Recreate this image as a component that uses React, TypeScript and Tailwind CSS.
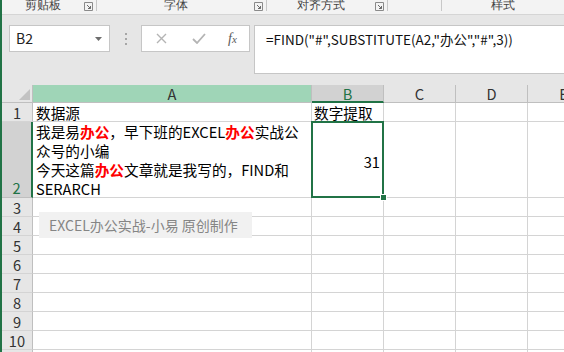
import React from 'react'

const CELL_FONT = { fontFamily: '"Noto Sans CJK SC", "Noto Sans", sans-serif' }

function Launcher() {
  return (
    <svg width="9" height="9" viewBox="0 0 9 9" className="shrink-0">
      <path d="M0.5 0.5h8v8h-8z" fill="none" stroke="#8a8a8a" strokeWidth="1" />
      <path d="M3 3l3.5 3.5M6.5 4v2.5H4" fill="none" stroke="#6a6a6a" strokeWidth="1" />
    </svg>
  )
}

function RibbonLabels() {
  return (
    <div className="flex h-[15px] overflow-hidden border-b border-[#d5d5d5] bg-[#f3f3f3] text-[12px] leading-[12px] text-[#444]">
      <div className="flex w-[95px] items-start">
        <span className="-mt-[1px] flex-1 text-center">剪贴板</span>
        <div className="mt-[2px]"><Launcher /></div>
        <span className="ml-[3px] h-[11px] w-px bg-[#c8c8c8]" />
      </div>
      <div className="flex w-[170px] items-start">
        <span className="-mt-[1px] flex-1 text-center">字体</span>
        <div className="mt-[2px]"><Launcher /></div>
        <span className="ml-[3px] h-[11px] w-px bg-[#c8c8c8]" />
      </div>
      <div className="flex w-[121px] items-start">
        <span className="-mt-[1px] flex-1 text-center">对齐方式</span>
        <div className="mt-[2px]"><Launcher /></div>
        <span className="ml-[3px] h-[11px] w-px bg-[#c8c8c8]" />
      </div>
      <div className="flex w-[54px] items-start justify-end">
        <span className="h-[11px] w-px bg-[#c8c8c8]" />
      </div>
      <div className="flex flex-1 items-start">
        <span className="-mt-[1px] flex-1 text-center">样式</span>
      </div>
    </div>
  )
}

function FormulaBar() {
  return (
    <div className="flex h-[70px] items-start bg-[#e6e6e6] pt-[10px]" style={CELL_FONT}>
      <div className="ml-[7px] flex h-[27px] w-[101px] items-center justify-between border border-[#c6c6c6] bg-white pl-[6px] pr-[7px] text-[14px] text-[#222]">
        <span>B2</span>
        <svg width="7" height="4" viewBox="0 0 7 4">
          <path d="M0 0h7L3.5 4z" fill="#6d6d6d" />
        </svg>
      </div>
      <div className="flex h-[27px] w-[31px] flex-col items-center justify-center gap-[3px]">
        <span className="h-[2px] w-[2px] bg-[#a6a6a6]" />
        <span className="h-[2px] w-[2px] bg-[#a6a6a6]" />
        <span className="h-[2px] w-[2px] bg-[#a6a6a6]" />
      </div>
      <div className="flex h-[27px] w-[109px] items-center border border-[#c6c6c6] bg-white">
        <svg width="11" height="11" viewBox="0 0 11 11" className="ml-[14px]">
          <path d="M1 1l9 9M10 1l-9 9" stroke="#b4b4b4" strokeWidth="1.4" />
        </svg>
        <svg width="14" height="11" viewBox="0 0 14 11" className="ml-[25px]">
          <path d="M1 6l4 4 8-9" fill="none" stroke="#b4b4b4" strokeWidth="1.8" />
        </svg>
        <span
          className="ml-[22px] text-[14px] italic text-[#5a5a5a]"
          style={{ fontFamily: '"Liberation Serif", serif' }}
        >
          f<span className="text-[11px]">x</span>
        </span>
      </div>
      <div className="ml-[4px] h-[49px] flex-1 border border-r-0 border-[#c6c6c6] bg-white pl-[11px] pt-[2px] text-[13.5px] leading-[22px] text-[#111]">
        =FIND("#",SUBSTITUTE(A2,"办公","#",3))
      </div>
    </div>
  )
}

function Red({ children }: { children: React.ReactNode }) {
  return <span className="font-bold text-[#ff0000]">{children}</span>
}

function RowHead({ n, active }: { n: number; active?: boolean }) {
  return active ? (
    <div className="flex w-[31px] shrink-0 items-end justify-center border-b border-r-2 border-b-[#bfbfbf] border-r-[#217346] bg-[#d2d2d2] text-[#217346]">
      {n}
    </div>
  ) : (
    <div className="flex w-[31px] shrink-0 items-center justify-center border-b border-r border-b-[#d4d4d4] border-r-[#bfbfbf] bg-[#e6e6e6] text-[#333]">
      {n}
    </div>
  )
}

function Cell({ w, children, className = '' }: { w: string; children?: React.ReactNode; className?: string }) {
  return (
    <div className={`${w} shrink-0 overflow-visible whitespace-nowrap border-b border-r border-[#d4d4d4] ${className}`}>
      {children}
    </div>
  )
}

function EmptyRow({ n }: { n: number }) {
  return (
    <div className="flex h-[19px]">
      <RowHead n={n} />
      <Cell w="w-[279px]" />
      <Cell w="w-[72px]" />
      <Cell w="w-[72px]" />
      <Cell w="w-[72px]" />
      <Cell w="w-[72px]" />
    </div>
  )
}

function Grid() {
  return (
    <div className="text-[14.67px] leading-[19px] text-black" style={CELL_FONT}>
      <div className="flex h-[18px] text-[#333]">
        <div className="relative w-[31px] shrink-0 border-b border-r border-[#bfbfbf] bg-[#e6e6e6]">
          <svg width="11" height="11" viewBox="0 0 11 11" className="absolute bottom-[2px] right-[2px]">
            <path d="M11 0v11H0z" fill="#c2c2c2" />
          </svg>
        </div>
        <div className="flex w-[279px] shrink-0 items-center justify-center border-b border-r border-[#bfbfbf] bg-[#9fd5b7] leading-[17px]">
          A
        </div>
        <div className="flex w-[72px] shrink-0 items-center justify-center border-b-2 border-r border-b-[#217346] border-r-[#bfbfbf] bg-[#d2d2d2] leading-[17px] text-[#217346]">
          B
        </div>
        <div className="flex w-[72px] shrink-0 items-center justify-center border-b border-r border-[#bfbfbf] bg-[#e6e6e6] leading-[17px]">
          C
        </div>
        <div className="flex w-[72px] shrink-0 items-center justify-center border-b border-r border-[#bfbfbf] bg-[#e6e6e6] leading-[17px]">
          D
        </div>
        <div className="flex w-[72px] shrink-0 items-center justify-center border-b border-r border-[#bfbfbf] bg-[#e6e6e6] leading-[17px]">
          E
        </div>
      </div>

      <div className="flex h-[19px]">
        <RowHead n={1} />
        <Cell w="w-[279px]" className="pl-[3px]">数据源</Cell>
        <Cell w="w-[72px]" className="pl-[2px]">数字提取</Cell>
        <Cell w="w-[72px]" />
        <Cell w="w-[72px]" />
        <Cell w="w-[72px]" />
      </div>

      <div className="flex h-[76px]">
        <RowHead n={2} active />
        <Cell w="w-[279px]" className="overflow-hidden pl-[3px]">
          <div>我是易<Red>办公</Red>，早下班的EXCEL<Red>办公</Red>实战公</div>
          <div>众号的小编</div>
          <div>今天这篇<Red>办公</Red>文章就是我写的，FIND和</div>
          <div>SERARCH</div>
        </Cell>
        <Cell w="w-[72px]" className="relative flex items-center justify-end pr-[3px] pt-[3px]">
          31
          <div className="absolute -bottom-[1px] -left-[1px] -right-[1px] -top-[1px] border-2 border-[#217346]" />
          <div className="absolute -bottom-[4px] -right-[4px] h-[7px] w-[7px] border border-white bg-[#217346]" />
        </Cell>
        <Cell w="w-[72px]" />
        <Cell w="w-[72px]" />
        <Cell w="w-[72px]" />
      </div>

      {[3, 4, 5, 6, 7, 8, 9, 10, 11].map((n) => (
        <EmptyRow key={n} n={n} />
      ))}
    </div>
  )
}

export default function App() {
  return (
    <div className="relative h-[352px] w-[564px] overflow-hidden border-l-2 border-[#217346] bg-white">
      <RibbonLabels />
      <FormulaBar />
      <Grid />
      <div
        className="absolute left-[37px] top-[212px] flex h-[26px] w-[213px] items-center bg-[#f1f1f1] pl-[10px] text-[14px] text-[#858585]"
        style={CELL_FONT}
      >
        EXCEL办公实战-小易 原创制作
      </div>
    </div>
  )
}
